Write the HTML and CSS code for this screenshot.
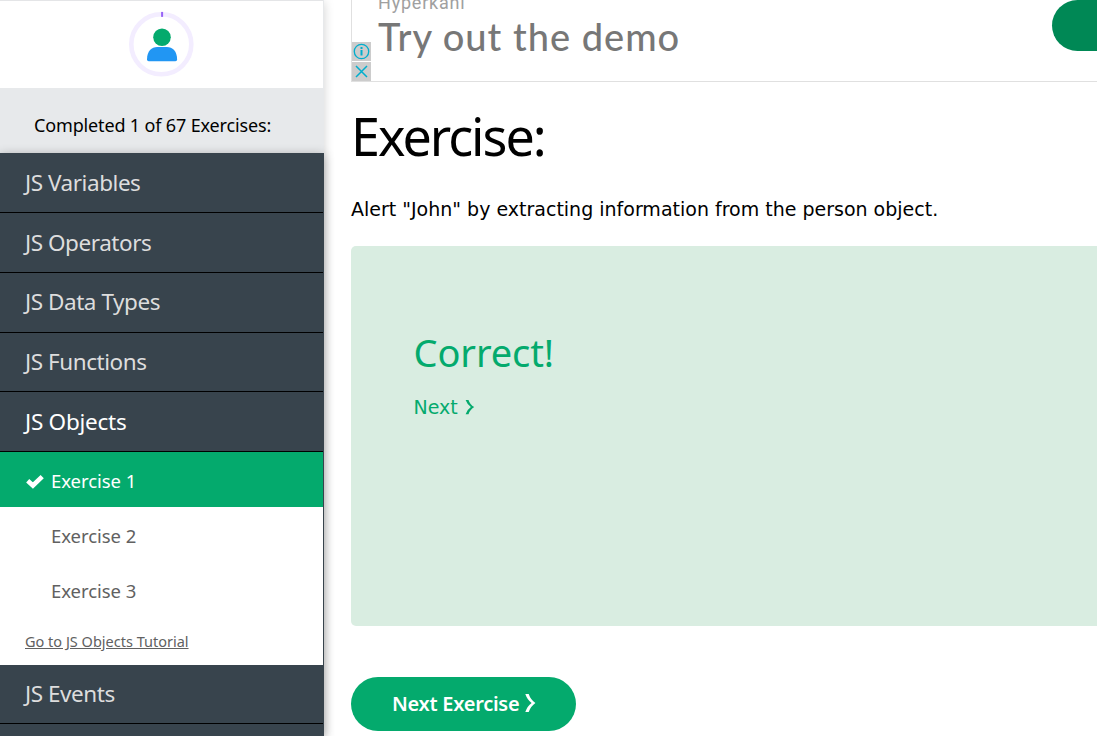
FILE: index.html
```html
<!DOCTYPE html>
<html lang="en">
<head>
<meta charset="utf-8">
<title>JS Exercises</title>
<link rel="stylesheet" href="styles.css">
</head>
<body>
<div class="app">
  <aside class="sidebar">
    <div class="profile">
      <svg class="avatar" width="66" height="66" viewBox="0 0 66 66">
        <circle cx="33.3" cy="33.3" r="30" fill="none" stroke="#f3edff" stroke-width="4.6"/>
        <path d="M34.1 .9V5.9" stroke="#9763f6" stroke-width="2"/>
        <circle cx="34" cy="26.3" r="8.8" fill="#04aa6d"/>
        <path d="M19 48.4C19 40 23.7 36 29.2 36H38.9C44.4 36 49.1 40 49.1 48.4Q49.1 50.2 47.4 50.2H20.7Q19 50.2 19 48.4Z" fill="#2196f3"/>
      </svg>
    </div>
    <div class="progress"><span>Completed 1 of 67 Exercises:</span></div>
    <nav class="menu">
      <a class="section low"><span>JS Variables</span></a>
      <a class="section low"><span>JS Operators</span></a>
      <a class="section"><span>JS Data Types</span></a>
      <a class="section short"><span>JS Functions</span></a>
      <a class="section low active"><span>JS Objects</span></a>
      <div class="sub">
        <a class="item done"><svg class="check" width="20" height="16" viewBox="0 0 20 16"><path d="M2.7 7.8L7.9 12.5L17.2 3.6" fill="none" stroke="#fff" stroke-width="4.6"/></svg><span>Exercise 1</span></a>
        <a class="item"><span>Exercise 2</span></a>
        <a class="item"><span>Exercise 3</span></a>
        <a class="tutorial"><span>Go to JS Objects Tutorial</span></a>
      </div>
      <a class="section short"><span>JS Events</span></a>
    </nav>
  </aside>
  <main class="main">
    <div class="ad">
      <div class="ad-controls">
        <svg width="19" height="19" viewBox="0 0 19 19"><rect width="19" height="19" fill="#ccc"/><circle cx="9.5" cy="9.5" r="7.2" fill="none" stroke="#00aecd" stroke-width="1.3"/><path d="M9.5 8V13.5M9.5 5V7" stroke="#00aecd" stroke-width="2"/></svg>
        <svg width="19" height="19" viewBox="0 0 19 19"><rect width="19" height="19" fill="#ccc"/><path d="M4 4L15 15M15 4L4 15" stroke="#00aecd" stroke-width="1.5"/></svg>
      </div>
      <div class="ad-copy">
        <div class="ad-brand"><span>Hyperkani</span></div>
        <div class="ad-title"><span>Try out the demo</span></div>
      </div>
      <div class="ad-button"></div>
    </div>
    <h1 class="title"><span>Exercise:</span></h1>
    <p class="task"><span>Alert "John" by extracting information from the person object.</span></p>
    <section class="result">
      <h2 class="correct"><span>Correct!</span></h2>
      <a class="next"><span>Next</span><svg width="10" height="15" viewBox="0 0 10 15"><path d="M.6 0H3.5Q4.9 4.4 9.2 7.1Q4.9 9.8 3.5 14.2H.6Q2.4 9.4 5.9 7.1Q2.4 4.8 .6 0Z" fill="#04aa6d"/></svg></a>
    </section>
    <a class="next-button"><span>Next Exercise</span><svg width="11" height="18" viewBox="0 0 11 18"><path d="M.3 0H3.7Q5.5 5.5 10.4 9Q5.5 12.5 3.7 18H.3Q2.4 12 6.6 9Q2.4 6 .3 0Z" fill="#fff"/></svg></a>
  </main>
</div>
</body>
</html>
```
FILE: styles.css
```css
* { box-sizing: border-box; }
body { margin: 0; background: #fff; font-family: "Noto Sans", "Open Sans", sans-serif; }
span { white-space: nowrap; }
.app { display: flex; width: 1097px; height: 736px; overflow: hidden; }
.sidebar { width: 324px; flex: none; display: flex; flex-direction: column; background: #e7e9eb; box-shadow: 0 2px 10px rgba(0,0,0,.18); }
.profile { height: 88px; width: 323px; background: #fff; border-top: 1px solid #e4e5e7; display: flex; justify-content: center; padding: 10px 1px 0 0; }
.progress { height: 65px; flex: none; padding: 8px 0 0 34px; display: flex; align-items: center; font-size: 18px; color: #000; letter-spacing: -.15px; }
.menu { flex: 1; background: #38444d; box-shadow: 0 2px 10px rgba(0,0,0,.3); }
.section { display: flex; align-items: center; width: 323px; height: 60px; padding: 0 0 2px 25px; border-bottom: 1px solid #000; font-size: 22.5px; color: #ddd; letter-spacing: -.45px; }
.section.low { padding-bottom: 0; }
.section.short { height: 59px; }
.section.active { color: #fff; letter-spacing: -.25px; }
.sub { width: 323px; height: 213px; background: #fff; }
.item { display: flex; align-items: center; height: 55px; padding: 1px 0 0 51px; font-size: 18.5px; color: #616161; letter-spacing: -.05px; }
.item.done { background: #04aa6d; color: #fff; padding-left: 25px; }
.check { margin: 1px 6px 0 0; }
.tutorial { display: flex; height: 48px; padding: 14px 0 0 25px; font-size: 14.5px; line-height: 20px; color: #616161; text-decoration: underline; letter-spacing: 0; }
.main { flex: 1; min-width: 0; padding-left: 27px; }
.ad { display: flex; height: 82px; border-left: 1px solid #e0e0e0; border-bottom: 1px solid #e0e0e0; overflow: hidden; }
.ad-controls { display: flex; flex-direction: column; gap: 1px; width: 19px; padding-top: 42px; }
.ad-copy { flex: 1; padding-left: 7px; }
.ad-brand { height: 12px; margin-top: -9px; font: 18px/24px Roboto, sans-serif; color: #a0a0a0; letter-spacing: .8px; }
.ad-title { margin-top: 10px; font: 500 38px/46px Lato, sans-serif; color: #777; letter-spacing: 1px; }
.ad-button { width: 45px; height: 51px; border-radius: 26px 0 0 26px; background: #008855; }
.title { margin: 20px 0 0; font-size: 52px; line-height: 68px; font-weight: 400; letter-spacing: -2px; }
.task { margin: 25px 0 0; font: 19px/28px "DejaVu Sans", sans-serif; }
.result { height: 380px; margin-top: 23px; padding: 76px 0 0 62.5px; background: #d9ede1; border-radius: 5px 0 0 5px; color: #04aa6d; }
.correct { margin: 0; font-size: 38px; line-height: 60px; font-weight: 400; letter-spacing: -.1px; }
.next { display: flex; align-items: center; gap: 7px; margin-top: 11px; font: 19px/28px "DejaVu Sans", sans-serif; }
.next-button { display: flex; align-items: center; gap: 6px; width: 225px; height: 54px; margin-top: 51px; padding: 0 0 2px 41px; border-radius: 27px; background: #04aa6d; color: #fff; font-size: 20px; font-weight: 600; letter-spacing: -.27px; }
```
